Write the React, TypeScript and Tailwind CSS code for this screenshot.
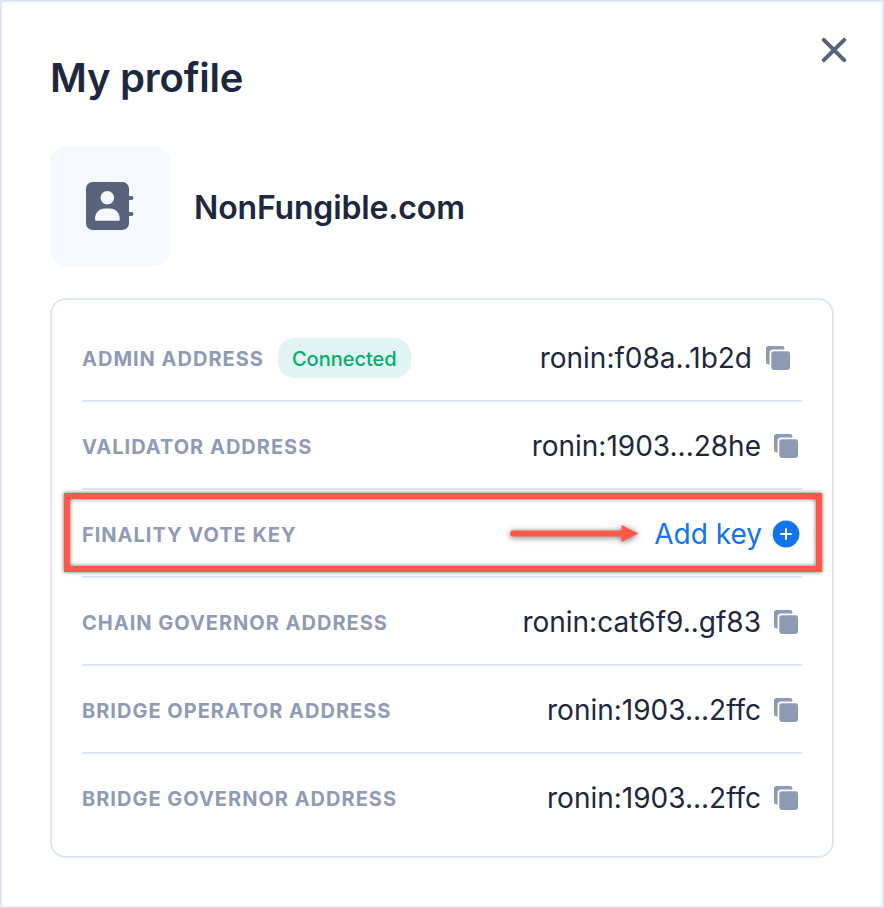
import type { ReactNode } from "react";

function CloseIcon() {
  return (
    <svg width="26" height="26" viewBox="0 0 26 26" fill="none" stroke="#57627b" strokeWidth="4" strokeLinecap="round">
      <path d="M2.8 2.8 23.2 23.2M23.2 2.8 2.8 23.2" />
    </svg>
  );
}

function ContactIcon() {
  return (
    <svg width="48" height="48" viewBox="0 0 48 48" fill="none">
      <path d="M40 16h5.4M40 32h5.4" stroke="#57627b" strokeWidth="4" strokeLinecap="round" />
      <rect width="43" height="48" rx="6.5" fill="#57627b" />
      <circle cx="21.3" cy="15.8" r="6.8" fill="#f5f8fe" />
      <path
        d="M9 37.2C9 31 13 26.6 19 26.6h4.8c6 0 10 4.4 10 10.6 0 1-.6 1.6-1.4 1.6h-22c-.8 0-1.4-.6-1.4-1.6Z"
        fill="#f5f8fe"
      />
    </svg>
  );
}

function CopyIcon() {
  return (
    <svg width="24" height="24" viewBox="0 0 24 24" fill="#8f9bb5">
      <path d="M2.4 0h13.8c1.3 0 2.2.9 2.4 3.6H7.2A3.6 3.6 0 0 0 3.6 7.2v11.4C.9 18.4 0 17.5 0 16.2V2.4A2.4 2.4 0 0 1 2.4 0Z" />
      <rect x="5.3" y="5.3" width="18.7" height="18.7" rx="2.4" />
    </svg>
  );
}

function PlusIcon() {
  return (
    <svg width="28" height="28" viewBox="0 0 28 28">
      <circle cx="14" cy="14" r="13.4" fill="#1273ea" />
      <path d="M14 9v10M9 14h10" stroke="#fff" strokeWidth="2" strokeLinecap="round" />
    </svg>
  );
}

function Row({ label, badge, children }: { label: string; badge?: ReactNode; children: ReactNode }) {
  return (
    <div className="flex h-[88px] items-center justify-between border-b-2 border-[#dde6f2] pt-0.5 last:border-transparent">
      <div className="flex items-center gap-[14px]">
        <span className="pt-0.5 text-[20px] leading-7 font-bold tracking-[1px] text-[#8f9bb5]">{label}</span>
        {badge}
      </div>
      {children}
    </div>
  );
}

function Address({ value, inset }: { value: string; inset?: boolean }) {
  return (
    <div className={inset ? "flex items-center gap-[14px] pr-3" : "flex items-center gap-[13px] pr-1"}>
      <span className="text-[28px] leading-10 font-[370] text-[#1d273d]">{value}</span>
      <CopyIcon />
    </div>
  );
}

export default function App() {
  return (
    <main className="relative h-[908px] w-[884px] border-2 border-[#dde6f2] bg-white px-12 pt-[52px] font-['Inter',sans-serif]">
      <button aria-label="Close" className="absolute top-[35px] right-[35px]">
        <CloseIcon />
      </button>

      <h1 className="text-[40px] leading-12 font-semibold tracking-[-0.25px] text-[#1d273d]">My profile</h1>

      <section className="mt-[44px] flex items-center gap-6">
        <div className="flex size-[120px] items-center justify-center rounded-2xl bg-[#f5f8fe]">
          <ContactIcon />
        </div>
        <h2 className="pt-[3px] text-[32px] leading-10 font-semibold tracking-[-0.15px] text-[#1d273d]">NonFungible.com</h2>
      </section>

      <section className="mt-8 h-[560px] w-[784px] rounded-2xl border-2 border-[#dde6f2] px-[30px] pt-[14px]">
        <Row
          label="ADMIN ADDRESS"
          badge={
            <span className="flex h-10 items-center rounded-2xl bg-[#e0f5f3] px-[14px] pt-0.5 text-[20px] font-medium text-[#06ac6c]">
              Connected
            </span>
          }
        >
          <Address value="ronin:f08a..1b2d" inset />
        </Row>
        <Row label="VALIDATOR ADDRESS">
          <Address value="ronin:1903...28he" />
        </Row>
        <div className="relative">
          <Row label="FINALITY VOTE KEY">
            <div className="flex items-center gap-[10px] pr-0.5">
              <span className="text-[28px] leading-10 font-[370] text-[#1273ea]">Add key</span>
              <PlusIcon />
            </div>
          </Row>
          <div className="absolute inset-x-[-18px] top-[3px] h-[79px] w-[758px] border-6 border-[#ff594b] shadow-[0_0_4px_rgba(0,0,0,0.6),inset_0_0_4px_rgba(0,0,0,0.6)]" />
          <svg
            className="absolute top-[24px] left-[420.5px] drop-shadow-[0_1px_3px_rgba(0,0,0,0.55)]"
            width="144"
            height="40"
            viewBox="0 0 144 40"
          >
            <path d="M10 19.5H120" stroke="#ff594b" strokeWidth="6" strokeLinecap="round" />
            <path d="M118.5 11v17L135.5 19.5Z" fill="#ff594b" />
          </svg>
        </div>
        <Row label="CHAIN GOVERNOR ADDRESS">
          <Address value="ronin:cat6f9..gf83" />
        </Row>
        <Row label="BRIDGE OPERATOR ADDRESS">
          <Address value="ronin:1903...2ffc" />
        </Row>
        <Row label="BRIDGE GOVERNOR ADDRESS">
          <Address value="ronin:1903...2ffc" />
        </Row>
      </section>
    </main>
  );
}
